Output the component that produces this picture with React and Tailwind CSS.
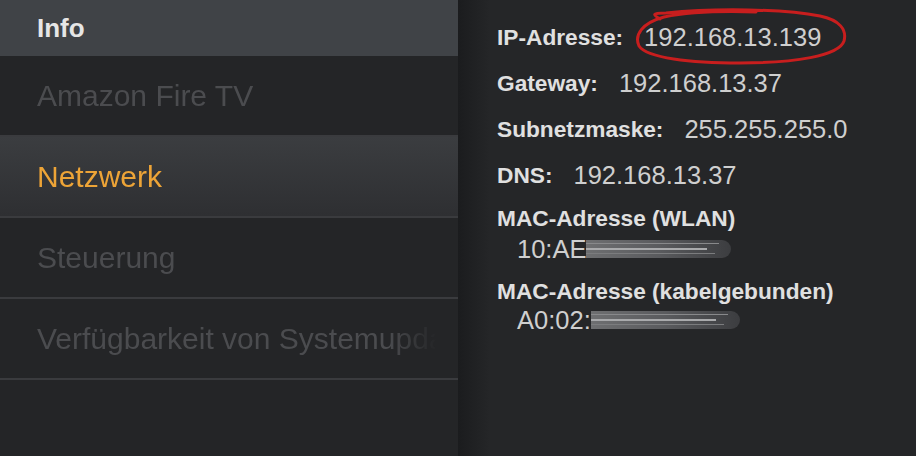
import React from "react";

const menu = [
  { label: "Amazon Fire TV" },
  { label: "Netzwerk", active: true },
  { label: "Steuerung" },
  { label: "Verfügbarkeit von Systemupdates" },
];

const rows = [
  { label: "IP-Adresse:", value: "192.168.13.139", circled: true },
  { label: "Gateway:", value: "192.168.13.37" },
  { label: "Subnetzmaske:", value: "255.255.255.0" },
  { label: "DNS:", value: "192.168.13.37" },
];

const Blurred = ({ width }) => (
  <span
    className="relative inline-block h-[18px] rounded-r-full overflow-hidden blur-[0.7px]"
    style={{ width }}
  >
    <span className="absolute inset-0 bg-gradient-to-r from-[#6e6f71] via-[#5a5b5e] to-[#3c3d40]" />
    <span className="absolute left-0 right-3 top-[3px] h-[1px] bg-[#88898b]" />
    <span className="absolute left-0 right-6 top-[8px] h-[2px] bg-[#a9aaac]" />
    <span className="absolute left-0 right-4 top-[13px] h-[1px] bg-[#7b7c7e]" />
  </span>
);

export default function App() {
  return (
    <div
      className="flex w-[916px] h-[456px] overflow-hidden bg-[#252628]"
      style={{ fontFamily: '"Liberation Sans", Arial, sans-serif' }}
    >
      {/* left menu */}
      <div className="w-[458px] shrink-0 flex flex-col bg-[#242527]">
        <div className="h-[56px] flex items-center pl-[37px] bg-[#404347]">
          <span className="text-[26px] font-bold text-[#e6e6e6]">Info</span>
        </div>
        {menu.map((item) => (
          <div
            key={item.label}
            className={`h-[81px] flex items-center pl-[37px] border-b-2 border-[#3a3b3e] ${
              item.active
                ? "bg-gradient-to-b from-[#3b3d40] to-[#2e2f32]"
                : ""
            }`}
          >
            <span
              className={`text-[30px] whitespace-nowrap overflow-hidden w-[400px] [mask-image:linear-gradient(to_right,black_88%,transparent)] ${
                item.active ? "text-[#eda437]" : "text-[#4b4c4f]"
              }`}
            >
              {item.label}
            </span>
          </div>
        ))}
      </div>

      {/* shadow strip */}
      <div className="w-[32px] shrink-0 bg-gradient-to-r from-[#1b1c1e] to-[#252628]" />

      {/* details */}
      <div className="flex-1 pl-[7px] pt-[14px] flex flex-col text-[#d4d4d4]">
        {rows.map((r) => (
          <div key={r.label} className="h-[46px] flex items-center">
            <span className="text-[22.7px] font-bold text-[#e0e0e0]">{r.label}</span>
            <span className="relative ml-[21px] text-[25.5px] leading-[37px] text-[#cfcfcf]">
              {r.value}
              {r.circled && (
                <svg
                  className="absolute left-[-10px] top-[-11px]"
                  width="214"
                  height="60"
                  viewBox="0 0 214 60"
                  fill="none"
                >
                  <path
                    d="M26 11 C19 7, 17 5, 32 5 C82 0, 150 1, 186 8 C206 12, 213 22, 210 33 C205 48, 160 55, 106 55 C56 55, 13 50, 5 38 C0 27, 8 15, 30 9 C60 3, 92 3, 122 4"
                    stroke="#c81e1e"
                    strokeWidth="3"
                    strokeLinecap="round"
                  />
                </svg>
              )}
            </span>
          </div>
        ))}

        <div className="mt-[8px] h-[24px] flex items-center text-[22.7px] font-bold text-[#e0e0e0]">
          MAC-Adresse (WLAN)
        </div>
        <div className="mt-[4px] h-[30px] pl-[20px] flex items-center text-[25.5px] text-[#cfcfcf]">
          10:AE
          <Blurred width={145} />
        </div>

        <div className="mt-[15px] h-[24px] flex items-center text-[22.7px] font-bold text-[#e0e0e0]">
          MAC-Adresse (kabelgebunden)
        </div>
        <div className="mt-[2px] h-[30px] pl-[20px] flex items-center text-[25.5px] text-[#cfcfcf]">
          A0:02:
          <Blurred width={149} />
        </div>
      </div>
    </div>
  );
}
